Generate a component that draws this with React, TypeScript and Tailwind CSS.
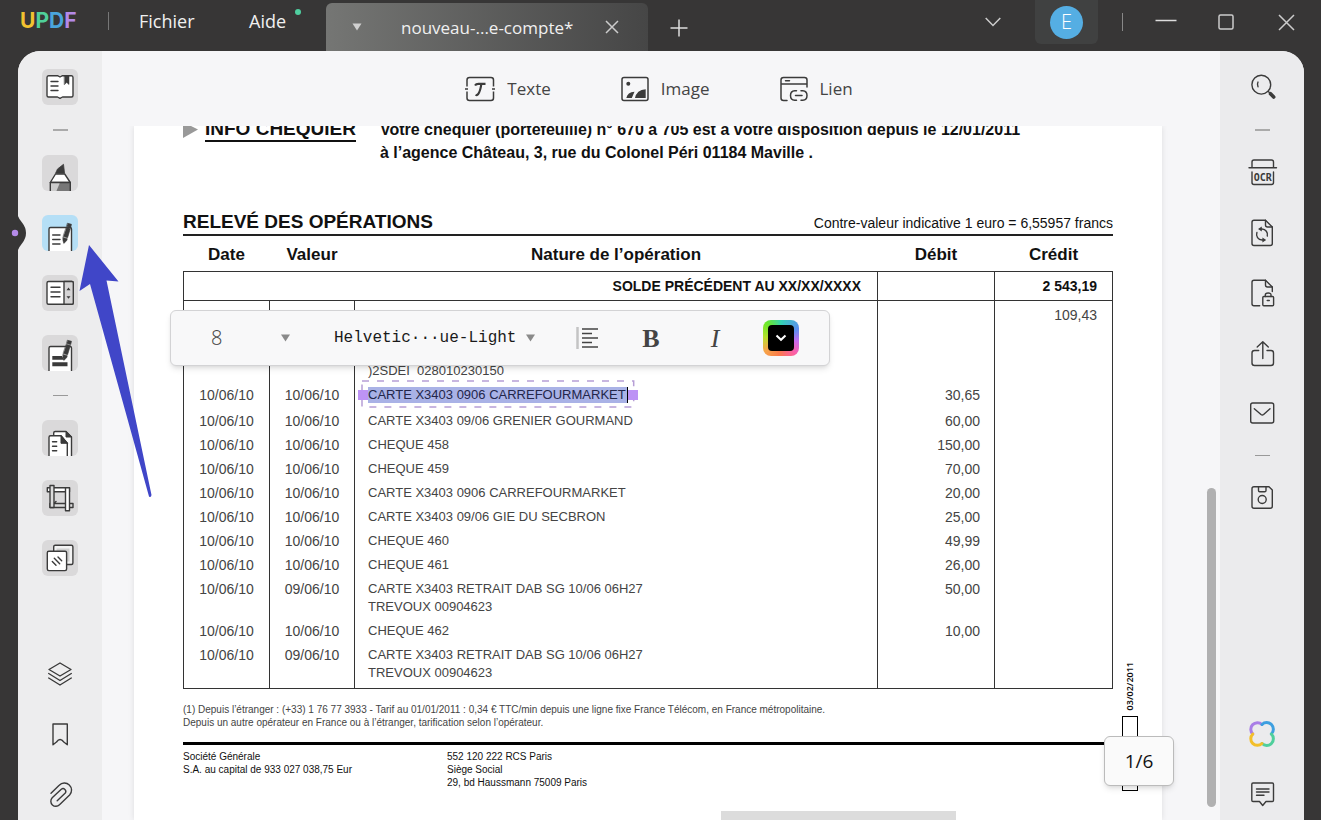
import type { ReactNode } from 'react';

const INK = '#3b3b3b';

function RailIcon({ children }: { children: ReactNode }) {
  return (
    <svg viewBox="0 0 36 36" className="size-9" fill="none" stroke={INK} strokeWidth="1.4" strokeLinecap="round" strokeLinejoin="round" aria-hidden="true">
      {children}
    </svg>
  );
}

function RailButton({ label, tone = 'plain', children }: { label: string; tone?: 'plain' | 'gray' | 'blue'; children: ReactNode }) {
  const tones = {
    plain: '',
    gray: 'bg-[#dad9da]',
    blue: 'bg-[#b5dff6]',
  };
  return (
    <button type="button" aria-label={label} className={`size-9 shrink-0 overflow-hidden rounded-md ${tones[tone]}`}>
      <RailIcon>{children}</RailIcon>
    </button>
  );
}

function Pen({ y }: { y: number }) {
  return (
    <g transform={`translate(0 ${y})`} fill={INK} stroke={INK} strokeWidth="0.6">
      <path d="M25.7 0.3L29.5 1.3L28.7 4.6L24.8 3.5Z" />
      <path d="M24.5 4.4L28.4 5.5L25.6 14.8L21.4 13.6Z" />
      <path d="M21.1 14.6L25.3 15.8L24.6 17.8L21.8 20.4L21 17.5Z" />
    </g>
  );
}

function Caret({ className }: { className: string }) {
  return (
    <svg viewBox="0 0 10 8" className={className} fill="currentColor" aria-hidden="true">
      <path d="M0.5 0.5H9.5L5 7.5Z" />
    </svg>
  );
}

function TitleBar() {
  return (
    <header className="flex h-[51px] shrink-0 items-start font-['Open_Sans',sans-serif] text-[#f0f0f0]">
      <div className="flex h-[42px] items-center pl-5">
        <div className="w-[58px] font-['Inter',sans-serif] text-[21px] font-bold">
          <span className="text-[#f2c230]">U</span>
          <span className="text-[#4fd09a]">P</span>
          <span className="text-[#4aa5dc]">D</span>
          <span className="text-[#b48ae8]">F</span>
        </div>
        <span className="ml-[30px] h-[18px] w-px bg-[#777]" />
        <button type="button" className="ml-[30px] w-14 text-left text-lg">Fichier</button>
        <button type="button" className="relative ml-[54px] w-10 text-left text-lg">
          Aide
          <span className="absolute top-0.5 -right-3 size-1.5 rounded-full bg-[#4fcfa0]" />
        </button>
      </div>
      <div className="mt-[3px] ml-[37px] flex h-12 w-[322px] items-center rounded-t-md bg-linear-to-r from-[#757674] to-[#464646] pl-[26px]">
        <Caret className="h-2 w-[10px] text-[#d0d0d0]" />
        <span className="ml-[39px] w-[190px] pt-0.5 text-[17px] whitespace-nowrap">nouveau-...e-compte*</span>
        <button type="button" aria-label="Fermer l’onglet" className="ml-[14px]">
          <svg viewBox="0 0 14 14" className="size-[14px]" stroke="#ccc" strokeWidth="1.5" aria-hidden="true">
            <path d="M1 1L13 13M13 1L1 13" />
          </svg>
        </button>
      </div>
      <button type="button" aria-label="Nouvel onglet" className="mt-[19px] ml-[22px]">
        <svg viewBox="0 0 18 18" className="size-[18px]" stroke="#ddd" strokeWidth="1.5" aria-hidden="true">
          <path d="M9 0.5V17.5M0.5 9H17.5" />
        </svg>
      </button>
      <div className="ml-auto flex h-[44px] items-center pr-[26px]">
        <button type="button" aria-label="Liste des onglets" className="mr-[34px]">
          <svg viewBox="0 0 16 10" className="h-[10px] w-4" fill="none" stroke="#ccc" strokeWidth="1.5" aria-hidden="true">
            <path d="M0.7 1L8 8.5L15.3 1" />
          </svg>
        </button>
        <button type="button" aria-label="Compte" className="flex h-[44px] w-[63px] items-center justify-center rounded-b-md bg-[#404141]">
          <span className="flex size-[33px] items-center justify-center rounded-full bg-[#55aee3] text-xl font-light text-white">E</span>
        </button>
        <span className="ml-6 h-[18px] w-px bg-[#888]" />
        <button type="button" aria-label="Réduire" className="ml-8">
          <svg viewBox="0 0 22 16" className="h-4 w-[22px]" stroke="#ddd" strokeWidth="1.5" aria-hidden="true">
            <path d="M0.5 6.5H21.5" />
          </svg>
        </button>
        <button type="button" aria-label="Agrandir" className="ml-[41px]">
          <svg viewBox="0 0 16 16" className="size-4" fill="none" stroke="#ccc" strokeWidth="1.5" aria-hidden="true">
            <rect x="1" y="1" width="14" height="14" rx="1.5" />
          </svg>
        </button>
        <button type="button" aria-label="Fermer" className="ml-11">
          <svg viewBox="0 0 17 17" className="size-[17px]" stroke="#ccc" strokeWidth="1.5" aria-hidden="true">
            <path d="M1 1L16 16M16 1L1 16" />
          </svg>
        </button>
      </div>
    </header>
  );
}

function LeftRail() {
  return (
    <nav aria-label="Outils" className="relative flex w-[84px] shrink-0 flex-col items-center gap-6 bg-[#ededee] pt-[18px] pb-2">
      <RailButton label="Lecteur" tone="gray">
        <path d="M5 8.5Q5 6.7 6.5 6.7H15.5L18 8L20.5 6.7H29.5Q31 6.7 31 8.5V26.5Q31 28 29.5 28H20.5L18 29.3L15.5 28H6.5Q5 28 5 26.5Z" fill="#fff" />
        <path d="M22.5 7H27V15.5L24.7 13.5L22.5 15.5Z" fill={INK} strokeWidth="0.5" />
        <path d="M9 12.5H16M9 17H16M9 21.5H16" />
      </RailButton>
      <span className="h-0.5 w-[15px] shrink-0 bg-[#aaa]" />
      <RailButton label="Commenter" tone="gray">
        <path d="M13.7 18L15.5 14L21.5 9.3L22.5 18Z" fill={INK} strokeWidth="0.8" />
        <path d="M13.5 19H22.7L28.3 27.5H8.3Z" fill="#fff" />
        <path d="M8.3 27.5H18L14 37H8.3Z" fill="#ccc" stroke="none" />
        <path d="M18 27.5H28.3V37H14Z" fill="#777" stroke="none" />
        <path d="M8.3 37V27.5H28.3V37" />
      </RailButton>
      <RailButton label="Modifier le PDF" tone="blue">
        <path d="M7 37V14Q7 12.5 8.5 12.5H28Q29.5 12.5 29.5 14V37" fill="#fff" />
        <path d="M10.7 20H18M10.7 24.5H18M10.7 29H18" />
        <Pen y={8} />
      </RailButton>
      <RailButton label="Formulaire" tone="gray">
        <rect x="5" y="6.5" width="26.3" height="22.7" rx="1.5" fill="#fff" />
        <path d="M22 6.5H30Q31.3 6.5 31.3 8V27.7Q31.3 29.2 30 29.2H22Z" fill="#d5d4d5" />
        <path d="M9 12.3H18M9 17H18M9 21.7H18" />
        <path d="M26.5 12.6L28.5 15.2H24.5ZM26.5 23.8L28.5 21.2H24.5Z" fill={INK} stroke="none" />
      </RailButton>
      <RailButton label="Caviarder" tone="gray">
        <path d="M7 37V13Q7 11.5 8.5 11.5H28Q29.5 11.5 29.5 13V37" fill="#fff" />
        <path d="M10.3 21H20L22 24.8H10.3ZM10.3 27.3H25.5V31.3H10.3Z" fill={INK} stroke="none" />
        <Pen y={5} />
      </RailButton>
      <span className="h-px w-[15px] shrink-0 bg-[#999]" />
      <RailButton label="Organiser les pages" tone="gray">
        <path d="M11.7 16V13Q11.7 11.5 13.2 11.5H24L29.5 17V37H11.7" fill="#fff" />
        <path d="M24 11.5V17H29.5Z" fill={INK} strokeWidth="1" />
        <path d="M7 37V17.3Q7 15.8 8.5 15.8H19L25.3 23.3V37" fill="#fff" />
        <path d="M19 15.8V23.3H25.3Z" fill={INK} strokeWidth="1" />
        <path d="M10.5 21.7H14.7M10.5 26.3H14.7M10.5 30.7H14.7" />
      </RailButton>
      <RailButton label="Recadrer" tone="gray">
        <path d="M5.3 7.7H27.5V11.7H5.3Z" fill="#fff" />
        <path d="M8 23.5H31V27.5H8Z" fill="#dcdcdc" />
        <path d="M8 5.5H12V27.5H8Z" fill="#dcdcdc" />
        <path d="M23.5 7.7H27.5V30.8H23.5Z" fill="#fff" />
        <path d="M12.5 23L14 21.5" />
      </RailButton>
      <RailButton label="Filigrane" tone="gray">
        <rect x="11.7" y="5.3" width="19.2" height="19.2" rx="1.5" fill="#f3f3f3" />
        <path d="M14.5 11V8.5H27.5V21.5H24.7V11Z" fill="#cfcfcf" stroke="none" />
        <rect x="5.3" y="11.3" width="19.3" height="19.3" rx="1.5" fill="#fff" />
        <path d="M10.3 21.5L14 25.2M12.3 18.3L17.7 23.7M16 17L19.7 20.7" />
      </RailButton>
      <div className="mt-auto flex flex-col gap-6">
        <RailButton label="Calques">
          <path d="M18 7L29 13.5L18 20L7 13.5Z" />
          <path d="M6.7 17.5L18 24.5L29.3 17.5M6.7 22L18 29L29.3 22" />
        </RailButton>
        <RailButton label="Signets">
          <path d="M11 8H25.3V28.7L21.8 26Q18 21 14.5 26L11 28.7Z" />
        </RailButton>
        <RailButton label="Pièces jointes">
          <path d="M9 17.2L17.2 9.2A7 7 0 0 1 27.6 19L17.5 28.7A5 5 0 0 1 10.2 21.8L19.3 13.2A2.8 2.8 0 0 1 23.3 17L15.2 24.7" />
        </RailButton>
      </div>
    </nav>
  );
}

function RightRail() {
  return (
    <nav aria-label="Actions" className="flex w-[84px] shrink-0 flex-col items-center gap-6 bg-[#ebebed] pt-[18px] pb-2">
      <RailButton label="Rechercher">
        <circle cx="17.3" cy="15.7" r="9.4" />
        <path d="M14 13Q12.8 15.3 14 17.8" />
        <path d="M24.3 22.5L26.5 24.5" />
        <path d="M26.5 24.7L29.7 28" strokeWidth="3.6" />
      </RailButton>
      <span className="h-0.5 w-[15px] shrink-0 bg-[#aaa]" />
      <RailButton label="Reconnaissance de texte">
        <path d="M8 12.7V7Q8 5 10 5H27.5Q29.5 5 29.5 7V12.7M5 12.7H32.5" />
        <path d="M8 17V27.5Q8 29.5 10 29.5H27.5Q29.5 29.5 29.5 27.5V17" />
        <text x="18.8" y="26" textAnchor="middle" fill={INK} stroke="none" fontSize="10" fontWeight="700" fontFamily="DejaVu Sans Mono, monospace">OCR</text>
      </RailButton>
      <RailButton label="Convertir">
        <path d="M21.5 5.3H10Q8 5.3 8 7.3V28.5Q8 30.5 10 30.5H26.3Q28.3 30.5 28.3 28.5V12Z" />
        <path d="M21.5 5.3V10Q21.5 12 23.5 12H28.3" />
        <path d="M16 14H18A5.6 5.6 0 0 1 23.3 21M20 25H18A5.6 5.6 0 0 1 12.9 17.5" />
        <path d="M17.8 11.5V16.5L14 14ZM18.4 22.5V27.5L22.2 25Z" fill={INK} stroke="none" />
      </RailButton>
      <RailButton label="Protéger">
        <path d="M28.3 16.5V12L21.5 5.3H10Q8 5.3 8 7.3V28.7Q8 30.7 10 30.7H15.7" />
        <path d="M21.5 5.3V10Q21.5 12 23.5 12H28.3" />
        <rect x="18.8" y="21.5" width="10.8" height="9.2" rx="1" />
        <path d="M21.3 21.5V20Q21.3 18 24.2 18T27 20V21.5M23.2 25.5H25.3" />
      </RailButton>
      <RailButton label="Partager">
        <path d="M14.7 15.5H10.5Q8 15.5 8 18V28Q8 30.5 10.5 30.5H27Q29.5 30.5 29.5 28V18Q29.5 15.5 27 15.5H23" />
        <path d="M18.8 23.5V7M13.2 12L18.8 6.8L24.3 12" />
      </RailButton>
      <RailButton label="Envoyer par e-mail">
        <rect x="6.7" y="8" width="23" height="20" rx="2" />
        <path d="M10.3 13.7L17 19.5Q18.3 20.5 19.6 19.5L26 13.7" />
      </RailButton>
      <span className="h-px w-[15px] shrink-0 bg-[#999]" />
      <RailButton label="Enregistrer">
        <path d="M10 6.7H25L28.3 10V26.3Q28.3 28.3 26.3 28.3H10Q8 28.3 8 26.3V8.7Q8 6.7 10 6.7Z" />
        <path d="M14.5 6.7V10.5Q14.5 11.7 15.7 11.7H20.7Q22 11.7 22 10.5V6.7" />
        <circle cx="18.2" cy="19.5" r="4" />
      </RailButton>
      <div className="mt-auto flex flex-col gap-6">
        <RailButton label="Assistant IA">
          <g strokeWidth="3">
            <path d="M18 8.5A6 6 0 1 0 8.8 18" stroke="#a97ee6" />
            <path d="M27.4 18A6 6 0 1 0 18 8.5" stroke="#3d9fe0" />
            <path d="M18 27.5A6 6 0 1 0 27.4 18" stroke="#4fcf9c" />
            <path d="M8.8 18A6 6 0 1 0 18 27.5" stroke="#f3bf2a" />
          </g>
        </RailButton>
        <RailButton label="Commentaires">
          <path d="M9 7H28.3Q29.5 7 29.5 8.2V24.3Q29.5 25.5 28.3 25.5H22L18.7 29.5L15.5 25.5H9Q7.8 25.5 7.8 24.3V8.2Q7.8 7 9 7Z" />
          <path d="M12.5 13H25M12.5 16H25M12.5 19.2H20" />
        </RailButton>
      </div>
    </nav>
  );
}

function EditTabs() {
  return (
    <div className="flex h-[75px] shrink-0 items-center justify-center gap-[70px] pr-1 font-['Open_Sans',sans-serif] text-[17px] text-[#444]">
      <button type="button" className="flex items-center gap-3">
        <svg viewBox="0 0 30 26" className="h-[26px] w-[30px]" fill="none" stroke={INK} strokeWidth="1.5" aria-hidden="true">
          <path d="M2 10.5V4Q2 1.5 4.5 1.5H26Q28.5 1.5 28.5 4V10.5M2 15.5V22Q2 24.5 4.5 24.5H26Q28.5 24.5 28.5 22V15.5M0 13H3M27 13H30" />
          <path d="M10 9.5Q11 7.8 13.5 7.8H20.5M16.3 8Q15.5 15 13 18.3Q11.8 19.7 10.8 18.5" strokeWidth="2.2" />
        </svg>
        Texte
      </button>
      <button type="button" className="flex items-center gap-3">
        <svg viewBox="0 0 28 26" className="h-[26px] w-7" fill="none" stroke={INK} strokeWidth="1.5" aria-hidden="true">
          <rect x="1" y="1.5" width="26" height="23" rx="2" />
          <circle cx="7.3" cy="7.7" r="2" fill={INK} stroke="none" />
          <path d="M5.3 22Q6.5 16.3 13.5 15.7L10.8 22ZM14 22Q15.5 14 24.7 13.2V22Z" fill={INK} stroke="none" />
        </svg>
        Image
      </button>
      <button type="button" className="flex items-center gap-3">
        <svg viewBox="0 0 28 26" className="h-[26px] w-7" fill="none" stroke={INK} strokeWidth="1.5" strokeLinecap="round" aria-hidden="true">
          <path d="M7 24.5H3.5Q1 24.5 1 22V4Q1 1.5 3.5 1.5H24.5Q27 1.5 27 4V11M1 8H27M5.5 4.7H9.5" />
          <path d="M16.5 14.7H14.7Q10.5 15 10.5 19.5T14.7 24.3H16.5M21 14.7H22.8Q27 15 27 19.5T22.8 24.3H21M15.5 19.5H22" />
        </svg>
        Lien
      </button>
    </div>
  );
}

type Operation = {
  date: string;
  valeur: string;
  nature: string[];
  debit: string;
};

const operations: Operation[] = [
  { date: '10/06/10', valeur: '10/06/10', nature: ['CARTE X3403 09/06 GRENIER GOURMAND'], debit: '60,00' },
  { date: '10/06/10', valeur: '10/06/10', nature: ['CHEQUE 458'], debit: '150,00' },
  { date: '10/06/10', valeur: '10/06/10', nature: ['CHEQUE 459'], debit: '70,00' },
  { date: '10/06/10', valeur: '10/06/10', nature: ['CARTE X3403 0906 CARREFOURMARKET'], debit: '20,00' },
  { date: '10/06/10', valeur: '10/06/10', nature: ['CARTE X3403 09/06 GIE DU SECBRON'], debit: '25,00' },
  { date: '10/06/10', valeur: '10/06/10', nature: ['CHEQUE 460'], debit: '49,99' },
  { date: '10/06/10', valeur: '10/06/10', nature: ['CHEQUE 461'], debit: '26,00' },
  { date: '10/06/10', valeur: '09/06/10', nature: ['CARTE X3403 RETRAIT DAB SG 10/06 06H27', 'TREVOUX 00904623'], debit: '50,00' },
  { date: '10/06/10', valeur: '10/06/10', nature: ['CHEQUE 462'], debit: '10,00' },
  { date: '10/06/10', valeur: '09/06/10', nature: ['CARTE X3403 RETRAIT DAB SG 10/06 06H27', 'TREVOUX 00904623'], debit: '' },
];

function SelectedText({ children }: { children: ReactNode }) {
  return (
    <span className="relative inline-block bg-[#a9b2e6] pr-0.5 leading-4 text-[#23264a]">
      {children}
      <svg className="absolute -top-1.5 -left-1.5 h-[26px] w-[calc(100%+12px)] overflow-visible" fill="none" aria-hidden="true">
        <rect width="100%" height="100%" stroke="#b79fd6" strokeWidth="1.5" strokeDasharray="7 8" />
      </svg>
      <span className="absolute top-[3px] -left-2.5 size-2.5 bg-[#bd93f5]" />
      <span className="absolute top-[3px] -right-2.5 size-2.5 bg-[#bd93f5]" />
      <span className="absolute top-0 right-0 h-4 w-px bg-black" />
    </span>
  );
}

function OperationsTable() {
  return (
    <table className="w-full table-fixed border-collapse text-sm leading-[18px] text-[#444]">
      <colgroup>
        <col className="w-[86px]" />
        <col className="w-[85px]" />
        <col />
        <col className="w-[117px]" />
        <col className="w-[118px]" />
      </colgroup>
      <thead className="text-[17px] text-[#111]">
        <tr className="h-[35px]">
          <th className="pt-1">Date</th>
          <th className="pt-1">Valeur</th>
          <th className="pt-1">Nature de l’opération</th>
          <th className="pt-1">Débit</th>
          <th className="pt-1">Crédit</th>
        </tr>
      </thead>
      <tbody className="[&_td]:align-top">
        <tr className="h-[29px] border border-[#333] font-bold text-[#111]">
          <td colSpan={3} className="border-r border-[#333] pt-[5px] pr-4 text-right">SOLDE PRÉCÉDENT AU XX/XX/XXXX</td>
          <td className="border-r border-[#333]" />
          <td className="pt-[5px] pr-[15px] text-right">2 543,19</td>
        </tr>
      </tbody>
      <tbody className="border border-[#333] text-center [&_td]:border-x [&_td]:border-[#333] [&_td]:align-top">
        <tr>
          <td />
          <td />
          <td className="pt-[61px] pb-1.5 pl-[13px] text-left text-[13px] whitespace-pre">)2SDEI  028010230150</td>
          <td />
          <td className="pt-[5px] pr-[15px] text-right">109,43</td>
        </tr>
        <tr className="h-[26px]">
          <td>10/06/10</td>
          <td>10/06/10</td>
          <td className="pl-[13px] text-left text-[13px]">
            <SelectedText>CARTE X3403 0906 CARREFOURMARKET</SelectedText>
          </td>
          <td className="pr-[14px] text-right">30,65</td>
          <td />
        </tr>
        {operations.map((op, i) => (
          <tr key={i}>
            <td>{op.date}</td>
            <td>{op.valeur}</td>
            <td className="pb-1.5 pl-[13px] text-left text-[13px]">
              {op.nature.map((line) => (
                <div key={line}>{line}</div>
              ))}
            </td>
            <td className="pr-[14px] text-right">{op.debit}</td>
            <td />
          </tr>
        ))}
      </tbody>
    </table>
  );
}

function FormatBar() {
  return (
    <div role="toolbar" aria-label="Mise en forme" className="absolute top-[184px] left-[68px] flex h-14 w-[660px] items-center rounded-md border border-[#d3d3d5] bg-[#f8f8f9] pr-[30px] pl-10 text-[#444] shadow-md">
      <label className="relative flex w-20 items-center">
        <select aria-label="Taille" defaultValue="8" className="w-full appearance-none bg-transparent text-xl font-['Open_Sans',sans-serif] font-light">
          <option>8</option>
          <option>10</option>
          <option>12</option>
        </select>
        <Caret className="pointer-events-none absolute right-0 h-2 w-[11px] text-[#8a8a8a]" />
      </label>
      <label className="relative ml-[43px] flex w-[202px] items-center">
        <select aria-label="Police" defaultValue="HelveticaNeue-Light" className="w-full appearance-none bg-transparent font-['Liberation_Mono',monospace] text-base text-[#1a1a1a]">
          <option value="HelveticaNeue-Light">Helvetic···ue-Light</option>
        </select>
        <Caret className="pointer-events-none absolute right-0 h-2 w-[11px] text-[#8a8a8a]" />
      </label>
      <button type="button" aria-label="Alignement" className="ml-10">
        <svg viewBox="0 0 23 22" className="h-[22px] w-[23px]" stroke="#444" strokeWidth="1.6" aria-hidden="true">
          <path d="M1.5 0V22" stroke="#c4c4c4" strokeWidth="2.5" />
          <path d="M6 2H22M6 6.5H16M6 11H22M6 15.5H16M6 20H22" />
        </svg>
      </button>
      <button type="button" aria-label="Gras" className="ml-auto w-5 font-['Liberation_Serif',serif] text-[26px] font-bold">B</button>
      <button type="button" aria-label="Italique" className="ml-11 w-5 font-['Liberation_Serif',serif] text-[26px] italic">I</button>
      <button type="button" aria-label="Couleur du texte" className="ml-[38px] flex size-9 items-center justify-center rounded-lg bg-[conic-gradient(#33d3b4,#5b8ff0_17%,#c56af0_28%,#fb5fa8_38%,#fb7a4a_52%,#f7a54a_64%,#b5e02c_76%,#6be82a_88%,#33d3b4)]">
        <span className="flex size-[26px] items-center justify-center rounded bg-black">
          <svg viewBox="0 0 12 8" className="h-2 w-3" fill="none" stroke="#fff" strokeWidth="2" aria-hidden="true">
            <path d="M1.5 1.5L6 5.8L10.5 1.5" />
          </svg>
        </span>
      </button>
    </div>
  );
}

function Statement() {
  return (
    <article className="relative mr-[58px] ml-8 h-full overflow-hidden bg-white px-[49px] font-['Liberation_Sans',sans-serif] text-[#111] shadow-[0_0_6px_#0000001a]">
      <section className="-mt-2 flex items-start leading-[23px] font-bold">
        <svg viewBox="0 0 15 16" className="mt-1 h-4 w-[15px]" fill="#999" aria-hidden="true">
          <path d="M0 0L15 7.5L0 16Z" />
        </svg>
        <h2 className="ml-[7px] border-b-2 border-[#111] text-[19px] leading-[22px]">INFO CHÉQUIER</h2>
        <p className="ml-6 text-base leading-[23px]">
          Votre chéquier (portefeuille) n° 670 à 705 est à votre disposition depuis le 12/01/2011
          <br />
          à l’agence Château, 3, rue du Colonel Péri 01184 Maville .
        </p>
      </section>
      <section className="mt-[45px]">
        <div className="flex items-end justify-between border-b-2 border-[#222]">
          <h2 className="text-[19px] leading-[25px] font-bold">RELEVÉ DES OPÉRATIONS</h2>
          <p className="text-sm leading-[22px]">Contre-valeur indicative 1 euro = 6,55957 francs</p>
        </div>
        <OperationsTable />
      </section>
      <p className="mt-[14px] text-[10px] leading-[13px] text-[#444]">
        (1) Depuis l’étranger : (+33) 1 76 77 3933 - Tarif au 01/01/2011 : 0,34 € TTC/min depuis une ligne fixe France Télécom, en France métropolitaine.
        <br />
        Depuis un autre opérateur en France ou à l’étranger, tarification selon l’opérateur.
      </p>
      <footer className="mt-[13px] flex border-t-3 border-black pt-[5px] text-[10px] leading-[13px]">
        <p className="w-[264px]">
          Société Générale
          <br />
          S.A. au capital de 933 027 038,75 Eur
        </p>
        <p>
          552 120 222 RCS Paris
          <br />
          Siège Social
          <br />
          29, bd Haussmann 75009 Paris
        </p>
      </footer>
      <div className="absolute top-[536px] right-6 flex flex-col items-center gap-1.5">
        <span className="rotate-180 font-['Noto_Sans',sans-serif] text-[9px] leading-4 font-semibold [writing-mode:vertical-rl]">03/02/2011</span>
        <span className="h-[75px] w-4 border border-black" />
      </div>
      <div className="absolute bottom-0 left-[587px] h-[9px] w-[235px] bg-[#dcdcdc]" />
    </article>
  );
}

export default function App() {
  return (
    <div className="relative flex h-screen min-w-[1200px] flex-col overflow-hidden bg-[#373636]">
      <TitleBar />
      <div className="mr-[17px] ml-[18px] flex min-h-0 flex-1 overflow-hidden rounded-t-[22px] bg-[#f6f6f8]">
        <LeftRail />
        <main className="flex min-w-0 flex-1 flex-col">
          <EditTabs />
          <div className="relative min-h-0 flex-1 overflow-hidden">
            <Statement />
            <FormatBar />
            <span className="absolute right-1 bottom-[13px] h-[319px] w-[9px] rounded-full bg-[#b0b0b1]" />
            <div className="absolute right-[46px] bottom-[34px] flex h-[50px] w-[70px] items-center justify-center rounded-md border border-[#bbb] bg-[#fafafa] font-['Open_Sans',sans-serif] text-[19px] text-[#111] shadow-md">
              1/6
            </div>
          </div>
        </main>
        <RightRail />
      </div>
      {/* active tool marker on the window edge */}
      <svg viewBox="0 0 30 40" className="pointer-events-none absolute top-[213px] left-0 h-10 w-[30px]" aria-hidden="true">
        <path d="M17.5 2Q19 6 22 9.5Q26 14.5 26 20T22 30.5Q19 34 17.5 38Z" fill="#373636" />
        <circle cx="15" cy="20" r="3.2" fill="#b48ae8" />
      </svg>
      <svg viewBox="0 0 74 254" className="pointer-events-none absolute top-[244px] left-[79px] h-[254px] w-[74px]" fill="#4046c8" aria-hidden="true">
        <path d="M10 1L39.5 37.5L27.5 36.5L72.5 251Q72 254 70 252.5L11 40L0.5 47Z" />
      </svg>
    </div>
  );
}
